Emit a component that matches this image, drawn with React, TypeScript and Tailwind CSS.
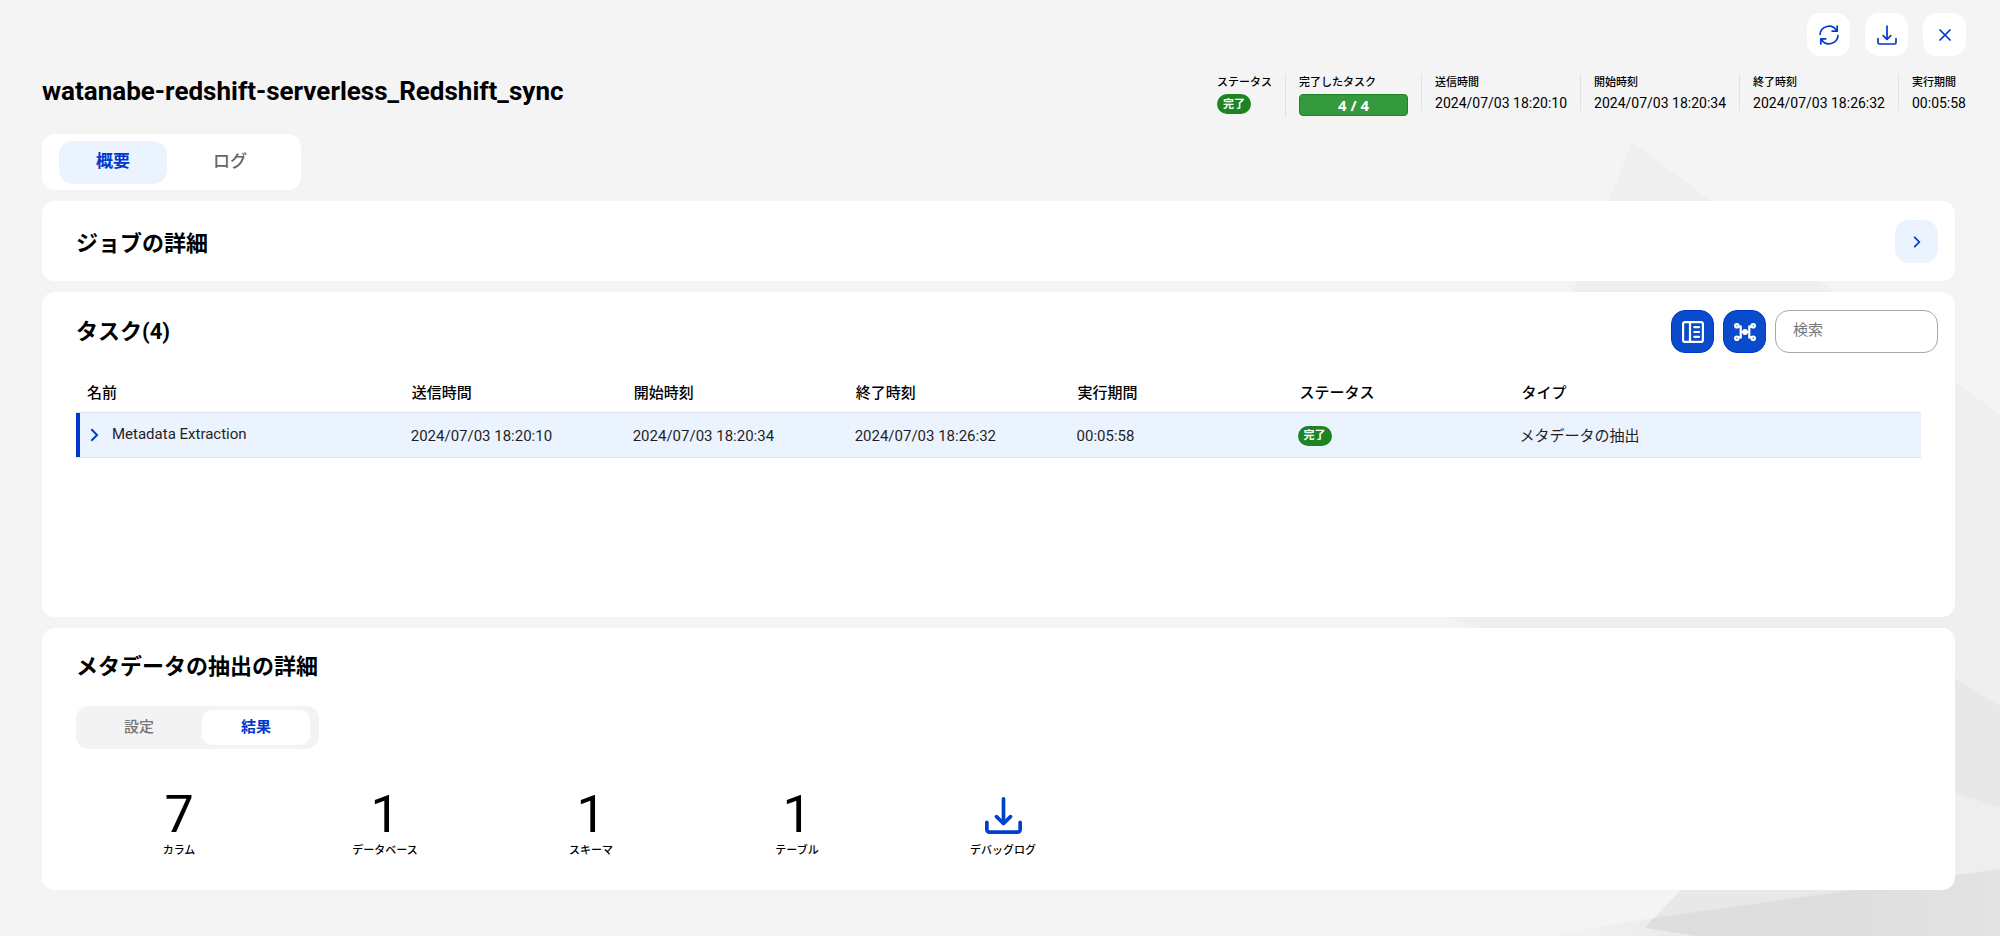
import type { ReactNode } from "react";

const stats = [
  { value: "7", label: "カラム" },
  { value: "1", label: "データベース" },
  { value: "1", label: "スキーマ" },
  { value: "1", label: "テーブル" },
];

const times = [
  { label: "送信時間", value: "2024/07/03 18:20:10" },
  { label: "開始時刻", value: "2024/07/03 18:20:34" },
  { label: "終了時刻", value: "2024/07/03 18:26:32" },
  { label: "実行期間", value: "00:05:58" },
];

function Backdrop() {
  return (
    <svg
      className="pointer-events-none absolute right-0 bottom-0 h-[800px] w-[600px]"
      viewBox="1400 136 600 800"
      aria-hidden="true"
    >
      <defs>
        <linearGradient id="fold" x1="0" y1="0" x2="1" y2="0">
          <stop offset="0" stopColor="#dedede" />
          <stop offset="0.5" stopColor="#dddddd" />
          <stop offset="1" stopColor="#e3e3e3" />
        </linearGradient>
        <linearGradient id="sheet" x1="0" y1="0" x2="1" y2="0">
          <stop offset="0" stopColor="#f4f4f4" />
          <stop offset="1" stopColor="#e9e9e9" />
        </linearGradient>
      </defs>
      <polygon points="1632,142 2000,415 2000,808 1445,617" fill="#efefef" />
      <polygon points="1920,658 2000,706 2000,808 1920,781" fill="#e8e8e8" />
      <polygon points="1920,781 2000,808 2000,870 1920,880" fill="#eeeeee" />
      <polygon points="1681,890 1853,890 1653,919" fill="#e8e8e8" />
      <polygon points="1540,936 1653,918 1645,928 1695,936" fill="url(#sheet)" />
      <polygon points="1653,918 1853,890 2000,869 2000,936 1695,936 1645,928" fill="url(#fold)" />
    </svg>
  );
}

function RefreshIcon() {
  return (
    <svg className="size-5" viewBox="0 0 20 20" fill="none" stroke="currentColor" strokeWidth="1.7" strokeLinecap="round" strokeLinejoin="round" aria-hidden="true">
      <path d="M1 9.500a9 9 0 0 1 16.600-4" />
      <path d="M18.200 1v5.200h-5" />
      <path d="M19 10.500a9 9 0 0 1-16.600 4" />
      <path d="M1.800 19v-5.200h5" />
    </svg>
  );
}

function DownloadIcon({ className, weight }: { className: string; weight: string }) {
  return (
    <svg className={className} viewBox="0 0 20 20" fill="none" stroke="currentColor" strokeWidth={weight} strokeLinecap="round" strokeLinejoin="round" aria-hidden="true">
      <path d="M10 1v13" />
      <path d="M6.200 10.600 10 14.300l3.800-3.700" />
      <path d="M1 13.700v3.900a1.400 1.400 0 0 0 1.400 1.400h15.200a1.400 1.400 0 0 0 1.400-1.400v-3.900" />
    </svg>
  );
}

function CloseIcon() {
  return (
    <svg className="size-3" viewBox="0 0 12 12" fill="none" stroke="currentColor" strokeWidth="1.700" strokeLinecap="round" aria-hidden="true">
      <path d="M1 1l10 10M11 1 1 11" />
    </svg>
  );
}

function ChevronIcon({ className }: { className: string }) {
  return (
    <svg className={className} viewBox="0 0 8 12" fill="none" stroke="currentColor" strokeWidth="1.700" strokeLinejoin="miter" aria-hidden="true">
      <path d="M1.200 0.900 6.300 6l-5.100 5.100" />
    </svg>
  );
}

function ListViewIcon() {
  return (
    <svg className="size-[22px]" viewBox="0 0 22 22" fill="none" stroke="currentColor" strokeWidth="2.200" strokeLinecap="round" aria-hidden="true">
      <rect x="1.100" y="1.100" width="19.800" height="19.800" rx="2" />
      <path d="M8 1v20M12.300 6.200h4.700M12.300 11h4.700M12.300 15.800h4.700" />
    </svg>
  );
}

function GraphIcon() {
  return (
    <svg className="h-[18px] w-[22px]" viewBox="0 0 22 18" fill="none" stroke="currentColor" strokeWidth="2.200" aria-hidden="true">
      <circle cx="2.800" cy="2.800" r="1.700" />
      <circle cx="19.200" cy="2.800" r="1.700" />
      <circle cx="2.800" cy="15.200" r="1.700" />
      <circle cx="19.200" cy="15.200" r="1.700" />
      <path d="M4.300 3.700h2.400v10.600h-2.400M17.700 3.700h-2.400v10.600h2.400M6.700 9h8.600" />
      <circle cx="11" cy="9" r="1.800" fill="currentColor" />
    </svg>
  );
}

function IconButton({ label, children }: { label: string; children: ReactNode }) {
  return (
    <button type="button" aria-label={label} className="flex size-[43px] items-center justify-center rounded-[14px] bg-white text-[#0038cc]">
      {children}
    </button>
  );
}

function Badge() {
  return (
    <span className="inline-flex h-5 w-[34px] items-center justify-center rounded-full bg-[#1c8423] text-[11px] leading-none font-bold text-white">
      完了
    </span>
  );
}

function Summary() {
  return (
    <dl className="flex items-start">
      <div className="flex h-[43px] flex-col items-start gap-[3px] border-r border-[#e2e2e2] pt-px pr-[13px]">
        <dt className="text-[11px] leading-4 font-medium">ステータス</dt>
        <dd className="flex">
          <Badge />
        </dd>
      </div>
      <div className="flex h-[43px] flex-col items-start gap-[3px] px-[13px] pt-px">
        <dt className="text-[11px] leading-4 font-medium">完了したタスク</dt>
        <dd className="flex h-[22px] w-[109px] items-center justify-center rounded-[4px] border border-[#1c8423] bg-[#35993d] font-['Open_Sans',sans-serif] text-[15px] leading-none font-bold text-white">
          4 / 4
        </dd>
      </div>
      {times.map((t) => (
        <div key={t.label} className="flex h-[37px] flex-col items-start gap-1 border-l border-[#e2e2e2] px-[13px] pt-px last:pr-0">
          <dt className="text-[11px] leading-4 font-medium">{t.label}</dt>
          <dd className="text-sm leading-4 whitespace-nowrap">{t.value}</dd>
        </div>
      ))}
    </dl>
  );
}

export default function App() {
  return (
    <div className="relative min-h-screen bg-[#f4f4f4] pt-[13px] pb-[45px] pl-[42px] font-[Roboto,'Noto_Sans_CJK_JP',sans-serif] text-black">
      <Backdrop />
      <div className="relative">
        <header className="pr-[34px]">
          <div className="flex justify-end gap-[15px]">
            <IconButton label="更新">
              <RefreshIcon />
            </IconButton>
            <IconButton label="ダウンロード">
              <DownloadIcon className="size-5" weight="1.700" />
            </IconButton>
            <IconButton label="閉じる">
              <CloseIcon />
            </IconButton>
          </div>
          <div className="flex items-start justify-between pt-[18px]">
            <h1 className="text-[26px] leading-[34px] font-bold">watanabe-redshift-serverless_Redshift_sync</h1>
            <Summary />
          </div>
        </header>

        <main className="flex flex-col gap-[11px] pt-[17px] pr-[45px]">
          <nav className="flex h-14 items-center gap-[9px] self-start rounded-[13px] bg-white px-[17px] text-[17px]">
            <button type="button" className="h-[43px] w-[108px] rounded-[14px] bg-[#ebf3ff] font-bold text-[#0038cc]">
              概要
            </button>
            <button type="button" className="h-[43px] w-[108px] font-medium text-[#666666]">
              ログ
            </button>
          </nav>

          <section className="flex h-20 items-center justify-between rounded-[13px] bg-white pt-px pr-[17px] pl-[34px]">
            <h2 className="pt-1 text-[22px] leading-8 font-bold">ジョブの詳細</h2>
            <button type="button" aria-label="展開" className="flex size-[43px] items-center justify-center rounded-[14px] bg-[#ebf3ff] text-[#0038cc]">
              <ChevronIcon className="h-3 w-2" />
            </button>
          </section>

          <section className="min-h-[325px] rounded-[13px] bg-white pt-[18px] pr-[17px] pl-[34px]">
            <div className="flex items-center justify-between">
              <h2 className="text-[22px] leading-8 font-bold">タスク(4)</h2>
              <div className="flex gap-[9px]">
                <button type="button" aria-label="リスト表示" className="flex size-[43px] items-center justify-center rounded-[14px] border border-[#0038cc] bg-[#094bcb] text-white">
                  <ListViewIcon />
                </button>
                <button type="button" aria-label="グラフ表示" className="flex size-[43px] items-center justify-center rounded-[14px] border border-[#0038cc] bg-[#094bcb] text-white">
                  <GraphIcon />
                </button>
                <input
                  type="search"
                  aria-label="検索"
                  placeholder="検索"
                  className="h-[43px] w-[163px] rounded-[14px] border border-[#a8a8a8] bg-white px-[17px] pb-[3px] text-[15px] outline-none placeholder:text-[#757575]"
                />
              </div>
            </div>

            <div className="pt-[18px] pr-[17px]">
              <table className="w-full table-fixed border-collapse text-left text-[15px]">
                <colgroup>
                  <col className="w-[17.6%]" />
                  <col className="w-[12.03%]" />
                  <col className="w-[12.03%]" />
                  <col className="w-[12.03%]" />
                  <col className="w-[12.03%]" />
                  <col className="w-[12.03%]" />
                  <col />
                </colgroup>
                <thead>
                  <tr className="h-[41px]">
                    {["名前", "送信時間", "開始時刻", "終了時刻", "実行期間", "ステータス", "タイプ"].map((h) => (
                      <th key={h} scope="col" className="px-[11px] pt-[3px] font-medium">
                        {h}
                      </th>
                    ))}
                  </tr>
                </thead>
                <tbody>
                  <tr className="h-[45px] border-y border-[#e0e4ea] bg-[#ebf3ff] text-[#1f1f1f]">
                    <td className="p-0">
                      <div className="flex h-11 items-center border-l-4 border-[#0038cc] pl-[10px]">
                        <button type="button" className="flex items-center gap-[13px]">
                          <ChevronIcon className="h-[14px] w-[9px] text-[#0038cc]" />
                          Metadata Extraction
                        </button>
                      </div>
                    </td>
                    {times.map((t) => (
                      <td key={t.label} className="px-[10px] pt-[3px] whitespace-nowrap">
                        {t.value}
                      </td>
                    ))}
                    <td className="px-[9px] pt-[2px]">
                      <div className="flex">
                        <Badge />
                      </div>
                    </td>
                    <td className="px-[9px] pt-[3px]">メタデータの抽出</td>
                  </tr>
                </tbody>
              </table>
            </div>
          </section>

          <section className="min-h-[262px] rounded-[13px] bg-white pt-[23px] pr-[17px] pl-[34px]">
            <h2 className="text-[22px] leading-8 font-bold">メタデータの抽出の詳細</h2>
            <div className="pt-[23px]">
              <div className="inline-flex h-[43px] items-center gap-[9px] rounded-[13px] bg-[#f3f3f3] px-[9px] align-top text-[15px]">
                <button type="button" className="h-[35px] w-[108px] font-medium text-[#757575]">
                  設定
                </button>
                <button type="button" className="h-[35px] w-[108px] rounded-[10px] bg-white font-bold text-[#0038cc]">
                  結果
                </button>
              </div>
            </div>
            <div className="flex pt-[38px]">
              {stats.map((s) => (
                <div key={s.label} className="flex w-[206px] flex-col items-center">
                  <span className="text-[52px] leading-[56px]">{s.value}</span>
                  <span className="text-[11px] leading-4 font-medium">{s.label}</span>
                </div>
              ))}
              <div className="flex w-[206px] justify-center">
                <button type="button" className="flex flex-col items-center">
                  <span className="flex h-14 items-center text-[#0041cc]">
                    <DownloadIcon className="size-[37px]" weight="2" />
                  </span>
                  <span className="text-[11px] leading-4 font-medium">デバッグログ</span>
                </button>
              </div>
            </div>
          </section>
        </main>
      </div>
    </div>
  );
}
